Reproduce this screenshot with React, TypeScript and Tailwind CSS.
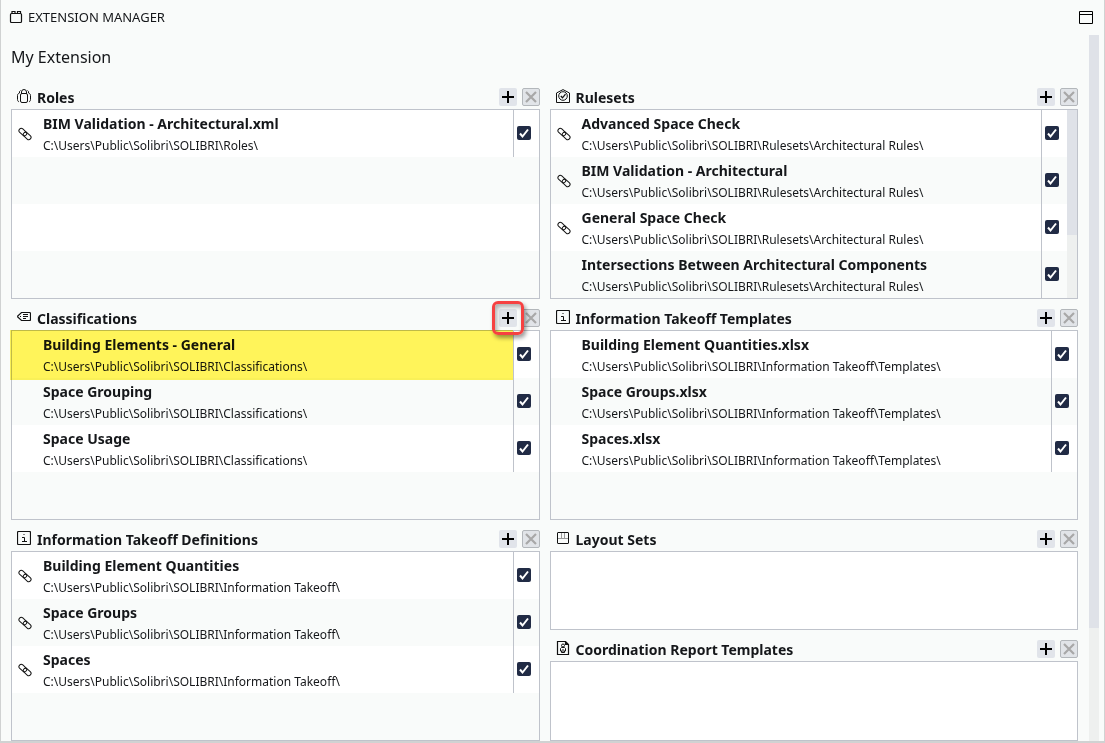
import type { ReactNode } from "react";

type Entry = { name: string; path: string; linked?: boolean; highlighted?: boolean };

const ROOT = "C:\\Users\\Public\\Solibri\\SOLIBRI\\";

const roles: Entry[] = [{ name: "BIM Validation - Architectural.xml", path: "Roles\\", linked: true }];

const classifications: Entry[] = [
  { name: "Building Elements - General", path: "Classifications\\", highlighted: true },
  { name: "Space Grouping", path: "Classifications\\" },
  { name: "Space Usage", path: "Classifications\\" },
];

const definitions: Entry[] = [
  { name: "Building Element Quantities", path: "Information Takeoff\\", linked: true },
  { name: "Space Groups", path: "Information Takeoff\\", linked: true },
  { name: "Spaces", path: "Information Takeoff\\", linked: true },
];

const rulesets: Entry[] = [
  { name: "Advanced Space Check", path: "Rulesets\\Architectural Rules\\", linked: true },
  { name: "BIM Validation - Architectural", path: "Rulesets\\Architectural Rules\\", linked: true },
  { name: "General Space Check", path: "Rulesets\\Architectural Rules\\", linked: true },
  { name: "Intersections Between Architectural Components", path: "Rulesets\\Architectural Rules\\" },
];

const templates: Entry[] = [
  { name: "Building Element Quantities.xlsx", path: "Information Takeoff\\Templates\\" },
  { name: "Space Groups.xlsx", path: "Information Takeoff\\Templates\\" },
  { name: "Spaces.xlsx", path: "Information Takeoff\\Templates\\" },
];

const Icon = ({ children }: { children: ReactNode }) => (
  <svg viewBox="0 0 14 14" className="size-3.5 shrink-0" fill="none" stroke="#111" strokeWidth="1" aria-hidden="true">
    {children}
  </svg>
);

const BrickIcon = () => (
  <Icon>
    <rect x="1.5" y="3.5" width="11" height="9" rx="1" strokeWidth="1.2" />
    <path d="M3 3.5V1.5h3v2M8.5 3.5V1.5h3v2" strokeWidth="1.2" />
  </Icon>
);

const RolesIcon = () => (
  <Icon>
    <rect x="3.5" y="4.5" width="7" height="9" rx="1.5" />
    <path d="M4.5 4.8V3a2.5 2.5 0 0 1 5 0v1.8" />
    <path d="M3.5 1.5 2.5 2.5v1.500C1 4.500.5 5.500.5 6.500v4c0 1 .5 1.800 1.500 2.500M10.500 1.500l1 1v1.500c1.500.5 2 1.500 2 2.500v4c0 1-.5 1.800-1.500 2.500" />
  </Icon>
);

const RulesetIcon = () => (
  <Icon>
    <path d="M.5 4 7 .6 13.500 4v9.500H.5z" />
    <circle cx="7" cy="7" r="4.300" />
    <path d="m4.800 7 1.700 1.800 3-3.600" strokeWidth="1.300" />
  </Icon>
);

const TagIcon = () => (
  <Icon>
    <path d="M4.500 2.500h8a1 1 0 0 1 1 1v6a1 1 0 0 1-1 1h-8L.7 7v-1z" strokeWidth="1.200" />
    <path d="M6 4.500h5M6 6.500h5M6 8.500h3M3 6.500h1" />
  </Icon>
);

const InfoIcon = () => (
  <Icon>
    <rect x=".5" y=".5" width="13" height="13" rx="1" strokeWidth="1.200" />
    <path d="M5 6.500h2.500v4M5 10.500h5M6.500 3.500h1" />
  </Icon>
);

const LayoutIcon = () => (
  <Icon>
    <path d="M5.500 1.500v6M8.500 1.500v6M1.500 7.500h11" stroke="#999" />
    <rect x="1.500" y="1.500" width="11" height="11" rx=".5" />
  </Icon>
);

const ReportIcon = () => (
  <Icon>
    <path d="M1.500.5h8l3 3v10h-11zM9.500.5v3h3" strokeWidth="1.200" />
    <circle cx="7" cy="4.500" r="1.500" />
    <path d="M5.500 6.500h3l1 1v2.500h-5V7.500zM5.500 10v1.500h3V10M6.500 8.500h1" />
  </Icon>
);

const LinkIcon = () => (
  <Icon>
    <g transform="rotate(42 7 7)">
      <rect x="-.3" y="4.700" width="8.800" height="4.600" rx="2.300" />
      <rect x="5.500" y="4.700" width="8.800" height="4.600" rx="2.300" />
    </g>
  </Icon>
);

const Row = ({ entry, id, striped }: { entry: Entry; id: string; striped: boolean }) => (
  <li className={`flex h-[47px] ${striped ? "bg-[#f9fbfa]" : "bg-white"}`}>
    <div className="relative flex min-w-0 flex-1">
      <span className="flex w-[31px] shrink-0 items-center pl-1.5">{entry.linked && <LinkIcon />}</span>
      <label htmlFor={id} className="block min-w-0 pt-1 whitespace-nowrap">
        <span className="block text-[14px] leading-5 font-bold">{entry.name}</span>
        <span className="block text-[12px] leading-6">{ROOT + entry.path}</span>
      </label>
      {entry.highlighted && (
        <span className="pointer-events-none absolute -top-px right-0 -bottom-0.5 -left-0.5 bg-[#fff45a] mix-blend-multiply" />
      )}
    </div>
    <div className="grid w-[26px] shrink-0 items-center border-l border-[#bfc3cb] pb-0.5 pl-[3px]">
      <input
        id={id}
        type="checkbox"
        defaultChecked
        className="peer col-start-1 row-start-1 size-3.5 appearance-none rounded-xs bg-[#212b45]"
      />
      <svg
        viewBox="0 0 14 14"
        className="pointer-events-none invisible col-start-1 row-start-1 size-3.5 peer-checked:visible"
        fill="none"
        stroke="#fff"
        strokeWidth="2"
        aria-hidden="true"
      >
        <path d="m3 7.500 2.500 3L11 3.500" />
      </svg>
    </div>
  </li>
);

type PanelProps = {
  title: string;
  icon: ReactNode;
  entries?: Entry[];
  marked?: boolean;
  scrolls?: boolean;
};

const Panel = ({ title, icon, entries = [], marked, scrolls }: PanelProps) => (
  <section className="flex flex-col last:grow">
    <header className="flex h-[31px] items-start justify-between pt-2.5 pl-1.5">
      <div className="flex items-start gap-1.5">
        <span className="pt-px">{icon}</span>
        <h2 className="text-[14px] leading-5 font-bold">{title}</h2>
      </div>
      <div className="flex gap-[5px]">
        <button aria-label={`Add to ${title}`} className="relative grid size-[18px] place-items-center rounded-xs bg-[#e1e4ea]">
          <svg viewBox="0 0 12 12" className="size-3" stroke="#000" strokeWidth="2" aria-hidden="true">
            <path d="M6 0v12M0 6h12" />
          </svg>
          {marked && (
            <span className="pointer-events-none absolute -inset-x-[7px] -inset-y-2 z-10 rounded-md border-3 border-[#f64141] shadow-[2px_3px_4px_rgba(0,0,0,0.4),inset_2px_3px_4px_rgba(0,0,0,0.3)]" />
          )}
        </button>
        <button
          aria-label={`Remove from ${title}`}
          className="grid size-[18px] place-items-center rounded-xs border border-[#b3b7bb] bg-[#e1e4e8]"
        >
          <svg viewBox="0 0 12 12" className="size-3" stroke="#a8a8a8" strokeWidth="2.200" aria-hidden="true">
            <path d="m1 1 10 10M11 1 1 11" />
          </svg>
        </button>
      </div>
    </header>
    {entries.length > 0 ? (
      <div className="flex h-[190px] border border-[#bfc3cb]">
        <ul className="min-w-0 flex-1">
          {entries.map((entry, i) => (
            <Row key={entry.name} entry={entry} id={`${title}-${i}`} striped={i % 2 === 1} />
          ))}
          {/* blank rows keep the striping going to the bottom of the list */}
          {Array.from({ length: 4 - entries.length }, (_, i) => (
            <li key={i} className={`h-[47px] ${(entries.length + i) % 2 ? "bg-[#f9fbfa]" : "bg-white"}`} />
          ))}
        </ul>
        {scrolls && (
          <div className="w-2.5 bg-[#eef0ef]">
            <div className="h-2/3 bg-[#dfe2e8]" />
          </div>
        )}
      </div>
    ) : (
      <div className="min-h-[79px] grow border border-[#bfc3cb] bg-white" />
    )}
  </section>
);

const App = () => {
  return (
    <main className="flex min-h-screen flex-col border-x border-b-2 border-[#d0d2d2] bg-[#f9fbfa] font-['Noto_Sans',sans-serif] text-[#15171a]">
      <header className="flex h-[35px] items-center justify-between pr-[11px] pl-2">
        <div className="flex items-center gap-[5px] pb-0.5">
          <BrickIcon />
          <h1 className="text-[13px] leading-5">EXTENSION MANAGER</h1>
        </div>
        <button aria-label="Maximize">
          <svg viewBox="0 0 14 13" className="h-[13px] w-3.5" fill="none" stroke="#000" aria-hidden="true">
            <path d="M.5.5h13v12H.5zM.5 3.500h13" />
          </svg>
        </button>
      </header>
      <div className="flex flex-1">
        <div className="min-w-0 flex-1 pl-2.5">
          <p className="h-[43px] pt-2.5 text-[16px] leading-6">My Extension</p>
          <div className="grid grid-cols-2 gap-2.5">
            <div className="flex flex-col">
              <Panel title="Roles" icon={<RolesIcon />} entries={roles} />
              <Panel title="Classifications" icon={<TagIcon />} entries={classifications} marked />
              <Panel title="Information Takeoff Definitions" icon={<InfoIcon />} entries={definitions} />
            </div>
            <div className="flex flex-col">
              <Panel title="Rulesets" icon={<RulesetIcon />} entries={rulesets} scrolls />
              <Panel title="Information Takeoff Templates" icon={<InfoIcon />} entries={templates} />
              <Panel title="Layout Sets" icon={<LayoutIcon />} />
              <Panel title="Coordination Report Templates" icon={<ReportIcon />} />
            </div>
          </div>
        </div>
        <div className="mr-[5px] ml-[11px] w-2.5 bg-[#eef0ef]">
          <div className="h-[84%] bg-[#dfe2e8]" />
        </div>
      </div>
    </main>
  );
};

export default App;
